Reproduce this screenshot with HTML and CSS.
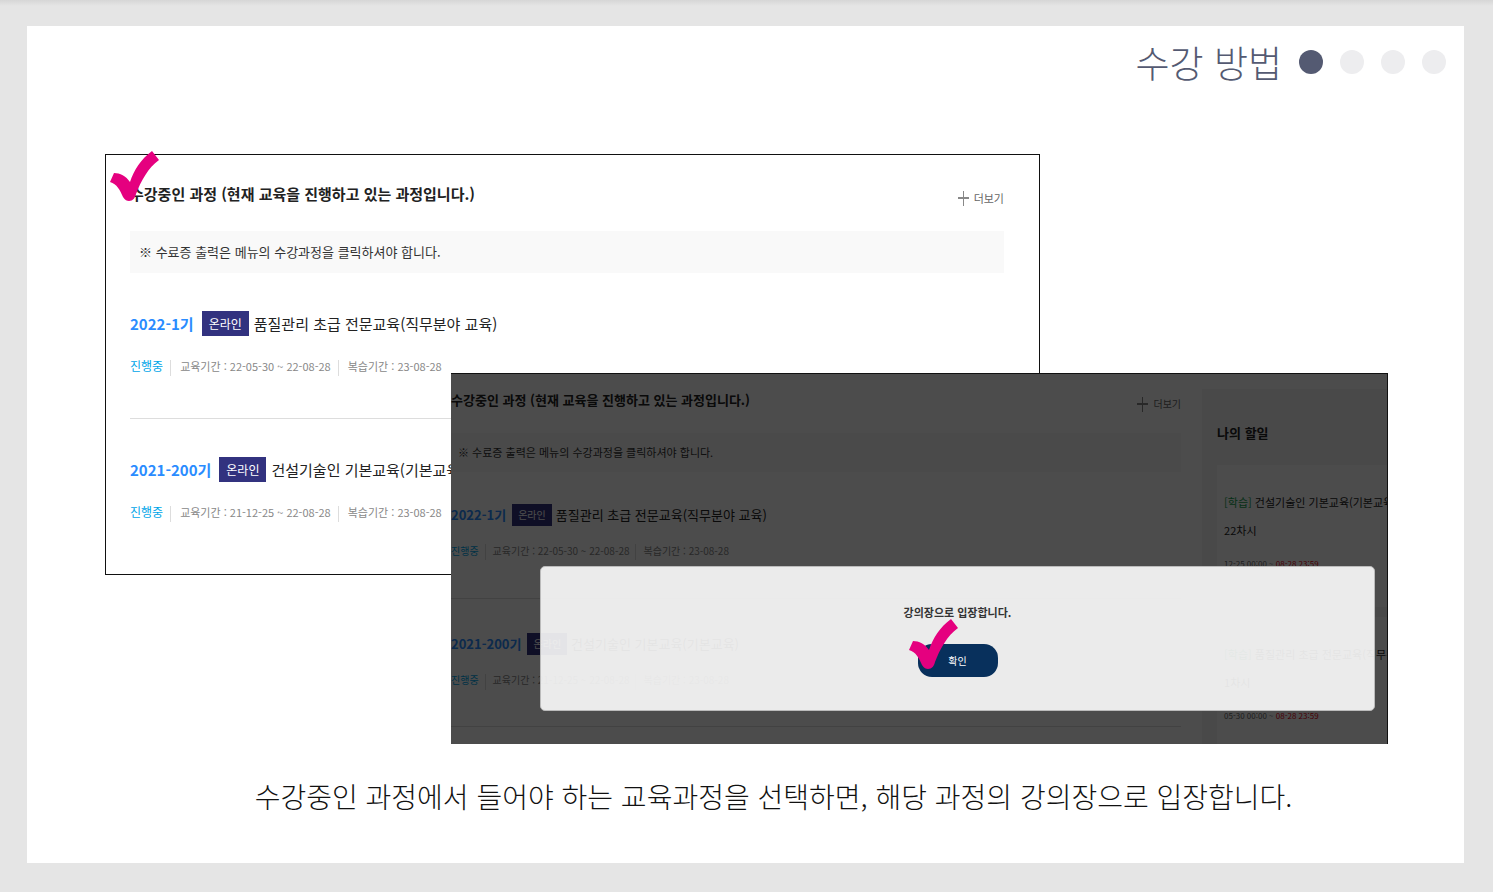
FILE: index.html
```html
<!DOCTYPE html>
<html lang="ko">
<head>
    <meta charset="UTF-8">
    <meta name="viewport" content="width=device-width, initial-scale=1.0">
    <title>수강 방법</title>
    <link rel="stylesheet" href="styles.css">
</head>
<body>
    <main class="slide">
        <header class="slide-header">
            <h1>수강 방법</h1>
            <span class="dot active"></span>
            <span class="dot"></span>
            <span class="dot"></span>
            <span class="dot"></span>
        </header>

        <div class="stage">
            <section class="panel panel-list">
                <svg class="check check-list" viewBox="0 0 49 50">
                    <path d="M4 22L0 31C7 33 10 39 13 46C15 49 17 50 19 50C23 50 25 47 26 43C31 30 38 17 49 9L42 0C31 8 24 19 20 31C16 25 10 22 4 22Z"/>
                </svg>
                <div class="panel-head">
                    <h2>수강중인 과정 (현재 교육을 진행하고 있는 과정입니다.)</h2>
                    <a class="more" href="#"><span class="plus"></span>더보기</a>
                </div>
                <p class="notice">※ 수료증 출력은 메뉴의 수강과정을 클릭하셔야 합니다.</p>
                <article class="course">
                    <h3><b>2022-1기</b><span class="badge">온라인</span><a href="#">품질관리 초급 전문교육(직무분야 교육)</a></h3>
                    <p class="meta"><span class="state">진행중</span><span>교육기간 : 22-05-30 ~ 22-08-28</span><span>복습기간 : 23-08-28</span></p>
                </article>
                <article class="course">
                    <h3><b>2021-200기</b><span class="badge">온라인</span><a href="#">건설기술인 기본교육(기본교육)</a></h3>
                    <p class="meta"><span class="state">진행중</span><span>교육기간 : 21-12-25 ~ 22-08-28</span><span>복습기간 : 23-08-28</span></p>
                </article>
            </section>

            <section class="panel panel-popup">
                <div class="screen">
                    <div class="screen-main">
                        <div class="panel-head">
                            <h2>수강중인 과정 (현재 교육을 진행하고 있는 과정입니다.)</h2>
                            <a class="more" href="#"><span class="plus"></span>더보기</a>
                        </div>
                        <p class="notice">※ 수료증 출력은 메뉴의 수강과정을 클릭하셔야 합니다.</p>
                        <article class="course">
                            <h3><b>2022-1기</b><span class="badge">온라인</span><a href="#">품질관리 초급 전문교육(직무분야 교육)</a></h3>
                            <p class="meta"><span class="state">진행중</span><span>교육기간 : 22-05-30 ~ 22-08-28</span><span>복습기간 : 23-08-28</span></p>
                        </article>
                        <article class="course">
                            <h3><b>2021-200기</b><span class="badge">온라인</span><a href="#">건설기술인 기본교육(기본교육)</a></h3>
                            <p class="meta"><span class="state">진행중</span><span>교육기간 : 21-12-25 ~ 22-08-28</span><span>복습기간 : 23-08-28</span></p>
                        </article>
                    </div>
                    <aside class="todo">
                        <h2>나의 할일</h2>
                        <div class="todo-card">
                            <p><em>[학습]</em> 건설기술인 기본교육(기본교육)<br>22차시</p>
                            <small>12-25 00:00 ~ <i>08-28 23:59</i></small>
                        </div>
                        <div class="todo-card">
                            <p><em>[학습]</em> 품질관리 초급 전문교육(직무분야 교육)<br>1차시</p>
                            <small>05-30 00:00 ~ <i>08-28 23:59</i></small>
                        </div>
                    </aside>
                </div>
                <div class="backdrop"></div>
                <div class="dialog" role="dialog">
                    <p>강의장으로 입장합니다.</p>
                    <div class="confirm">
                        <button type="button">확인</button>
                        <svg class="check check-confirm" viewBox="0 0 49 50">
                            <path d="M4 22L0 31C7 33 10 39 13 46C15 49 17 50 19 50C23 50 25 47 26 43C31 30 38 17 49 9L42 0C31 8 24 19 20 31C16 25 10 22 4 22Z"/>
                        </svg>
                    </div>
                </div>
            </section>
        </div>

        <p class="caption">수강중인 과정에서 들어야 하는 교육과정을 선택하면, 해당 과정의 강의장으로 입장합니다.</p>
    </main>
</body>
</html>
```
FILE: styles.css
```css
* {
    box-sizing: border-box;
}

body {
    font-family: "Noto Sans CJK KR", sans-serif;
    margin: 0;
    padding: 26px 29px 29px 27px;
    min-height: 100vh;
    display: flex;
    background: #e5e5e5 linear-gradient(#d6d6d6, #e5e5e5) no-repeat top / 100% 6px;
    color: #222;
}

h1, h2, h3, p {
    margin: 0;
}

a {
    color: inherit;
    text-decoration: none;
}

.slide {
    flex: 1;
    min-width: 0;
    background-color: #fff;
}

/* title and page dots */
.slide-header {
    display: flex;
    justify-content: flex-end;
    align-items: center;
    gap: 17px;
    padding: 12px 18px 0 0;
    margin-bottom: 68px;
}

.slide-header h1 {
    font-size: 37px;
    line-height: 48px;
    font-weight: 300;
    color: #545a72;
}

.dot {
    width: 24px;
    height: 24px;
    border-radius: 50%;
    background-color: #ededef;
}

.dot.active {
    background-color: #545a72;
}

/* two overlapping screens */
.stage {
    display: grid;
    grid-template-columns: minmax(0, 346fr) minmax(0, 589fr) minmax(0, 348fr);
    grid-template-rows: 219px auto 169px;
    margin: 0 76px 0 78px;
}

.panel {
    position: relative;
    white-space: nowrap;
    background-color: #fff;
}

.panel-list {
    grid-area: 1 / 1 / 3 / 3;
    border: 1px solid #111;
    padding: 25px 35px 10px 24px;
}

.panel-popup {
    grid-area: 2 / 2 / 4 / 4;
    height: 371px;
    overflow: hidden;
    border: solid #111;
    border-width: 1px 1px 0 0;
}

.panel-head {
    display: flex;
    justify-content: space-between;
    align-items: flex-end;
    margin-bottom: 23px;
}

.panel-head h2 {
    font-size: 15px;
    line-height: 28px;
}

.more {
    display: flex;
    align-items: center;
    gap: 5px;
    font-size: 11px;
    line-height: 20px;
    color: #666;
}

.plus {
    width: 11px;
    height: 15px;
    background:
        linear-gradient(#888, #888) center / 11px 2px no-repeat,
        linear-gradient(#888, #888) center / 1px 15px no-repeat;
}

.notice {
    padding-left: 9px;
    font-size: 13px;
    line-height: 42px;
    background-color: #f9f9f9;
    color: #333;
}

.course {
    padding: 38px 0 42px;
}

.course + .course {
    border-top: 1px solid #ddd;
}

.course h3 {
    display: flex;
    align-items: center;
    font-size: 15px;
    line-height: 25px;
    font-weight: 400;
    margin-bottom: 20px;
}

.course b {
    color: #2a8cff;
}

.badge {
    margin: 0 5px 0 8px;
    padding: 0 7px;
    font-size: 12px;
    background-color: #32327f;
    color: #fff;
}

.meta {
    display: flex;
    align-items: center;
    font-size: 11px;
    line-height: 20px;
    color: #888;
}

.meta span + span::before {
    content: "";
    display: inline-block;
    height: 16px;
    margin: 0 9px 0 7px;
    border-left: 1px solid #ddd;
    vertical-align: middle;
}

.meta .state {
    font-size: 12px;
    color: #00a5e8;
}

/* dimmed screen behind the dialog */
.screen {
    display: flex;
    gap: 21px;
}

.screen-main {
    flex: 0 0 78%;
    min-width: 0;
    padding-top: 14px;
}

.screen .panel-head {
    margin-bottom: 21px;
}

.screen h2 {
    font-size: 13px;
    line-height: 24px;
}

.screen .more {
    font-size: 10px;
    line-height: 16px;
}

.screen .notice {
    padding-left: 7px;
    font-size: 11px;
    line-height: 39px;
}

.screen .course {
    padding: 32px 0 38px;
    border-bottom: 1px solid #ddd;
}

.screen .course + .course {
    border-top: 0;
    padding: 34px 0 36px;
}

.screen .course h3 {
    font-size: 13px;
    line-height: 22px;
    margin-bottom: 16px;
}

.screen .badge {
    font-size: 10px;
    margin: 0 4px 0 6px;
    padding: 0 6px;
}

.screen .meta,
.screen .state {
    font-size: 10px;
    line-height: 18px;
}

.screen .meta span + span::before {
    margin: 0 7px 0 6px;
}

.todo {
    flex: 1;
    min-width: 0;
    margin-top: 15px;
    padding: 32px 0 0 15px;
    background-color: #f3f3f3;
}

.todo h2 {
    margin-bottom: 20px;
}

.todo-card {
    margin-bottom: 10px;
    padding: 23px 0 33px 7px;
    background-color: #fff;
    font-size: 11px;
    line-height: 28px;
}

.todo-card em {
    font-style: normal;
    color: #14a050;
}

.todo-card small {
    display: block;
    margin-top: 10px;
    font-size: 8px;
    line-height: 20px;
    color: #666;
}

.todo-card i {
    font-style: normal;
    color: #e60012;
}

.backdrop {
    position: absolute;
    inset: 0;
    background-color: rgba(0, 0, 0, 0.7);
}

.dialog {
    position: absolute;
    top: 192px;
    bottom: 33px;
    left: 89px;
    right: 12px;
    display: flex;
    flex-direction: column;
    align-items: center;
    justify-content: center;
    gap: 20px;
    border: 1px solid #bbb;
    border-radius: 5px;
    background-color: rgba(255, 255, 255, 0.89);
}

.dialog p {
    font-size: 11px;
    line-height: 24px;
    font-weight: 700;
    color: #333;
}

.confirm {
    position: relative;
}

.confirm button {
    display: block;
    width: 80px;
    height: 33px;
    border: 0;
    border-radius: 14px;
    background-color: #08305c;
    color: #fff;
    font-family: inherit;
    font-size: 10px;
}

.check {
    position: absolute;
    width: 49px;
    height: 50px;
    fill: #e5007f;
}

.check-list {
    top: -4px;
    left: 4px;
}

.check-confirm {
    top: -25px;
    left: -9px;
}

.caption {
    padding: 32px 0 47px 56px;
    text-align: center;
    font-size: 28px;
    line-height: 40px;
    font-weight: 300;
    color: #111;
}
```
